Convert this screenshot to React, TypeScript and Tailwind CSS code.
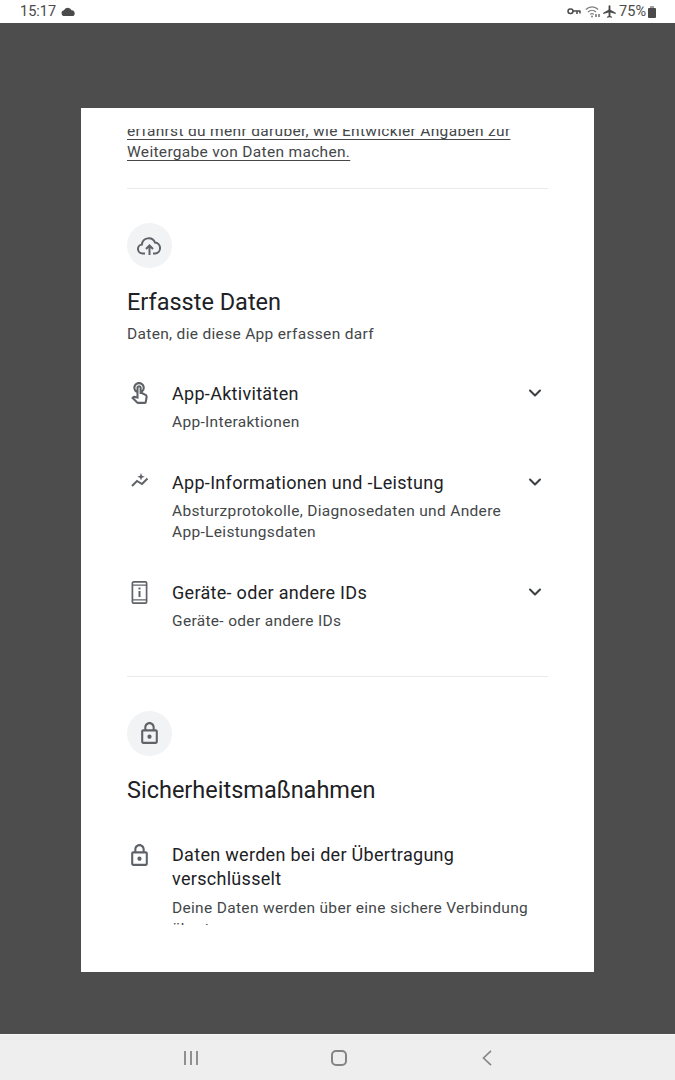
import React from "react";
import { ChevronDown } from "lucide-react";

const LockIcon = () => (
  <svg viewBox="0 0 24 24" fill="currentColor" className="w-[25px] h-[25px]">
    <path d="M18 8h-1V6c0-2.76-2.24-5-5-5S7 3.24 7 6v2H6c-1.1 0-2 .9-2 2v10c0 1.1.9 2 2 2h12c1.1 0 2-.9 2-2V10c0-1.1-.9-2-2-2zM9 6c0-1.66 1.34-3 3-3s3 1.34 3 3v2H9V6zm9 14H6V10h12v10zm-6-3c1.1 0 2-.9 2-2s-.9-2-2-2-2 .9-2 2 .9 2 2 2z" />
  </svg>
);

const TouchIcon = () => (
  <svg viewBox="0 0 24 24" fill="currentColor" className="w-[25px] h-[25px]">
    <path d="M18.19 12.44l-3.24-1.62c1.29-1 2.12-2.56 2.12-4.32C17.07 3.47 14.6 1 11.57 1S6.07 3.47 6.07 6.5c0 2.13 1.22 3.98 3 4.89v3.26c-2.15-.46-2.02-.44-2.26-.44-.53 0-1.03.21-1.41.59L4 16.22l5.09 5.09C9.52 21.75 10.12 22 10.74 22h6.3c.98 0 1.81-.7 1.97-1.67l.8-4.71c.22-1.3-.43-2.58-1.62-3.18zm-.35 2.85l-.8 4.71h-6.3c-.09 0-.17-.04-.24-.1l-3.68-3.68 4.25.89V6.5c0-.28.22-.5.5-.5s.5.22.5.5v6h1.76l3.46 1.73c.4.2.62.63.55 1.06zM8.07 6.5c0-1.93 1.57-3.5 3.5-3.5s3.5 1.57 3.5 3.5c0 .95-.38 1.81-1 2.44V6.5c0-1.38-1.12-2.5-2.5-2.5s-2.5 1.12-2.5 2.5v2.44c-.62-.63-1-1.49-1-2.44z" />
  </svg>
);

const TrendIcon = () => (
  <svg viewBox="0 0 24 24" fill="none" stroke="currentColor" strokeWidth="2" className="w-[24px] h-[24px] ml-[1px]">
    <path d="M4 16l5-5 5 3 5.500-5.500" />
    <path d="M13 3l1 2.800 2.800 1-2.800 1-1 2.800-1-2.800-2.800-1 2.800-1z" fill="currentColor" stroke="none" />
  </svg>
);

const DeviceInfoIcon = () => (
  <svg viewBox="0 0 25 25" fill="none" stroke="currentColor" strokeWidth="1.700" className="w-[25px] h-[25px]">
    <rect x="5.400" y="1.900" width="14.200" height="21.200" rx="1.200" />
    <path d="M5.400 5.200h14.200M5.400 19.800h14.200" strokeWidth="1.200" />
    <path d="M12.500 11v6" strokeWidth="2" />
    <path d="M12.500 7.500v2" strokeWidth="2" />
  </svg>
);

const dataRows = [
  { icon: <TouchIcon />, title: "App-Aktivitäten", lines: ["App-Interaktionen"] },
  {
    icon: <TrendIcon />,
    title: "App-Informationen und -Leistung",
    lines: ["Absturzprotokolle, Diagnosedaten und Andere", "App-Leistungsdaten"],
  },
  { icon: <DeviceInfoIcon />, title: "Geräte- oder andere IDs", lines: ["Geräte- oder andere IDs"] },
];

export default function App() {
  return (
    <div className="w-[675px] h-[1080px] flex flex-col bg-[#4d4d4d] font-['Roboto',sans-serif] overflow-hidden">
      {/* Status bar */}
      <div className="h-[23px] bg-white flex items-center justify-between pl-[20px] pr-[19px] text-[14.500px] text-[#4a4a4a]">
        <div className="flex items-center gap-[5px]">
          <span>15:17</span>
          <svg viewBox="0 0 24 16" className="w-[14px] h-[10px]" fill="#4a4a4a">
            <path d="M6 15a5 5 0 0 1-1-9.900A7 7 0 0 1 18 5a5 5 0 0 1 1 10z" />
          </svg>
        </div>
        <div className="flex items-center">
          <svg viewBox="0 0 14 7" className="w-[14px] h-[7px] mr-[4px]" fill="none" stroke="#4a4a4a" strokeWidth="1.500">
            <rect x="1" y="1" width="5" height="4.500" rx="2.200" />
            <path d="M6 3h7.500M10 3v3M13 3v2.500" />
          </svg>
          <svg viewBox="0 0 16 13" className="w-[16px] h-[13px] mr-[1px]" fill="none" stroke="#808080" strokeWidth="1.200">
            <path d="M.8 4.500c3.600-3.600 9-3.600 12.400 0M3 7c2.300-2.300 5.700-2.300 8 0M5.200 9.300c1-1 2.600-1 3.600 0" />
            <circle cx="7" cy="11.500" r="1" fill="#808080" stroke="none" />
            <path d="M11 9v3M14 9v3" stroke="#4a4a4a" />
          </svg>
          <svg viewBox="0 0 24 24" className="w-[15px] h-[15px]" fill="#4a4a4a">
            <path d="M22 16v-2l-8.500-5V3.500a1.500 1.500 0 0 0-3 0V9L2 14v2l8.500-2.500V19l-2.500 1.500V22l4-1 4 1v-1.500L13.500 19v-5.500z" />
          </svg>
          <span className="ml-[2px]">75%</span>
          <div className="w-[8px] h-[10px] ml-[2px] mt-[2px] bg-[#4a4a4a] rounded-[1px] relative">
            <div className="absolute -top-[2px] left-[2px] w-[4px] h-[2px] bg-[#a0a0a0]" />
          </div>
        </div>
      </div>

      {/* Scrim */}
      <div className="flex-1 flex justify-center items-start pt-[85px]">
        <div className="w-[513px] h-[864px] bg-white pt-[21px] px-[46px]">
          <div className="h-[796px] overflow-hidden">
            <div className="-mt-[8px]">
              <p className="text-[15.500px] leading-[21px] tracking-[0.32px] text-[#444749] underline underline-offset-[3px]">
                erfährst du mehr darüber, wie Entwickler Angaben zur
                <br />
                Weitergabe von Daten machen.
              </p>
              <div className="h-px bg-[#e8eaed] mt-[25px]" />

              <div className="w-[45px] h-[45px] rounded-full bg-[#f1f3f4] flex items-center justify-center mt-[34px] text-[#5f6368]">
                <svg viewBox="0 0 25 18" fill="none" stroke="currentColor" strokeWidth="2" className="w-[25px] h-[18px]">
                  <path d="M8 16.500H5.500a4.500 4.500 0 0 1-.6-8.960A6.800 6.800 0 0 1 18 5.600a5.500 5.500 0 0 1 .5 10.900H16" />
                  <path d="M12.500 18V9M9 12l3.500-3.500L16 12" />
                </svg>
              </div>
              <h2 className="text-[23.500px] leading-[28px] text-[#202124] mt-[20px]">Erfasste Daten</h2>
              <p className="text-[15.500px] leading-[21px] tracking-[0.32px] text-[#444749] mt-[8px]">
                Daten, die diese App erfassen darf
              </p>

              <div className="mt-[35px] flex flex-col gap-[36px]">
                {dataRows.map((row) => (
                  <div key={row.title} className="flex">
                    <div className="w-[45px] h-[26px] shrink-0 flex items-center text-[#5f6368]">{row.icon}</div>
                    <div className="flex-1">
                      <div className="flex items-center justify-between h-[26px] pr-[3px]">
                        <span className="text-[18px] tracking-[0.3px] text-[#202124]">{row.title}</span>
                        <ChevronDown className="w-[20px] h-[20px] text-[#3c4043]" strokeWidth={2.500} />
                      </div>
                      <p className="text-[15.500px] leading-[21px] tracking-[0.32px] text-[#444749] mt-[6px]">
                        {row.lines.map((line) => (
                          <span key={line} className="block">
                            {line}
                          </span>
                        ))}
                      </p>
                    </div>
                  </div>
                ))}
              </div>

              <div className="h-px bg-[#e8eaed] mt-[44px]" />

              <div className="w-[45px] h-[45px] rounded-full bg-[#f1f3f4] flex items-center justify-center mt-[34px] text-[#5f6368]">
                <LockIcon />
              </div>
              <h2 className="text-[23.500px] leading-[28px] text-[#202124] mt-[20px]">Sicherheitsmaßnahmen</h2>

              <div className="flex mt-[39px]">
                <div className="w-[45px] h-[24px] shrink-0 flex items-center text-[#5f6368]">
                  <LockIcon />
                </div>
                <div className="flex-1">
                  <p className="text-[18px] leading-[24px] tracking-[0.3px] text-[#202124]">
                    Daten werden bei der Übertragung
                    <br />
                    verschlüsselt
                  </p>
                  <p className="text-[15.500px] leading-[21px] tracking-[0.32px] text-[#444749] mt-[7px]">
                    Deine Daten werden über eine sichere Verbindung
                    <br />
                    übertragen
                  </p>
                </div>
              </div>
            </div>
          </div>
        </div>
      </div>

      {/* Nav bar */}
      <div className="h-[46px] bg-[#eeeeee] border-t border-[#f7f7f7] flex items-center pl-[183px] text-[#858585]">
        <svg viewBox="0 0 16 16" className="w-[16px] h-[16px]" fill="none" stroke="currentColor" strokeWidth="1.800">
          <path d="M2 1v14M8 1v14M14 1v14" />
        </svg>
        <div className="w-[16px] h-[16px] ml-[132px] border-2 border-current rounded-[5px]" />
        <svg viewBox="0 0 10 16" className="w-[10px] h-[16px] ml-[135px]" fill="none" stroke="currentColor" strokeWidth="1.600">
          <path d="M9 .8L1.500 8 9 15.200" />
        </svg>
      </div>
    </div>
  );
}
